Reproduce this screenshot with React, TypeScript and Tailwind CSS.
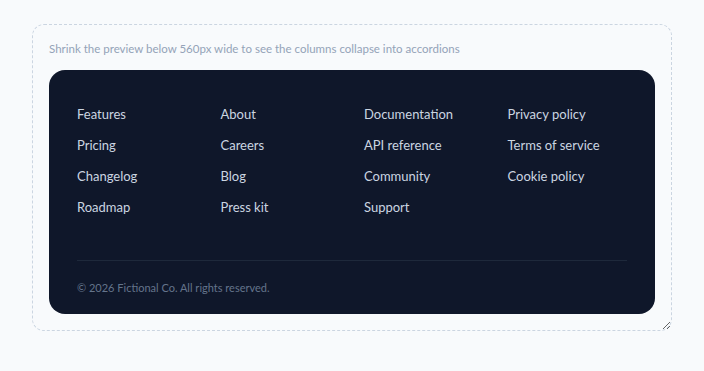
import React from "react";

const cols = [
  ["Features", "Pricing", "Changelog", "Roadmap"],
  ["About", "Careers", "Blog", "Press kit"],
  ["Documentation", "API reference", "Community", "Support"],
  ["Privacy policy", "Terms of service", "Cookie policy"],
];

export default function App() {
  return (
    <div
      className="min-h-screen bg-[#f8fafc] px-8 pt-6 pb-6"
      style={{ fontFamily: 'Lato, "Noto Sans", sans-serif' }}
    >
      <div className="resize overflow-auto rounded-xl border border-dashed border-[#cbd5e1] px-4 pt-4 pb-4">
        <p className="text-[11.5px] leading-4 text-[#94a3b8]">
          Shrink the preview below 560px wide to see the columns collapse into accordions
        </p>
        <footer className="mt-[13px] rounded-2xl bg-[#0f172a] px-7 pt-[34px] pb-[18px]">
          <div className="grid grid-cols-4 gap-6">
            {cols.map((c, i) => (
              <ul key={i} className="flex flex-col gap-[11px]">
                {c.map((l) => (
                  <li key={l} className="text-[13px] leading-5 text-[#cbd5e1]">
                    {l}
                  </li>
                ))}
              </ul>
            ))}
          </div>
          <div className="mt-[43px] border-t border-[#1e293b] pt-[19px]">
            <p className="text-[11px] leading-4 text-[#64748b]">
              © 2026 Fictional Co. All rights reserved.
            </p>
          </div>
        </footer>
      </div>
    </div>
  );
}
